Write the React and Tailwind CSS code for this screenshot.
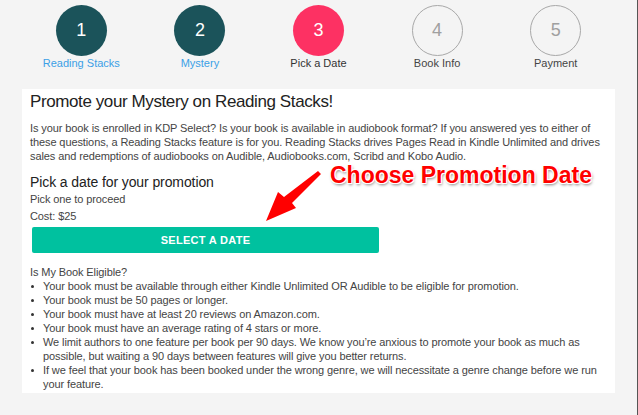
import React from "react";

const STEPS = [
  { n: 1, label: "Reading Stacks", state: "done" },
  { n: 2, label: "Mystery", state: "done" },
  { n: 3, label: "Pick a Date", state: "current" },
  { n: 4, label: "Book Info", state: "todo" },
  { n: 5, label: "Payment", state: "todo" },
];

const INTRO = [
  "Is your book is enrolled in KDP Select? Is your book is available in audiobook format? If you answered yes to either of",
  "these questions, a Reading Stacks feature is for you. Reading Stacks drives Pages Read in Kindle Unlimited and drives",
  "sales and redemptions of audiobooks on Audible, Audiobooks.com, Scribd and Kobo Audio.",
];

const RULES = [
  ["Your book must be available through either Kindle Unlimited OR Audible to be eligible for promotion."],
  ["Your book must be 50 pages or longer."],
  ["Your book must have at least 20 reviews on Amazon.com."],
  ["Your book must have an average rating of 4 stars or more."],
  [
    "We limit authors to one feature per book per 90 days. We know you’re anxious to promote your book as much as",
    "possible, but waiting a 90 days between features will give you better returns.",
  ],
  [
    "If we feel that your book has been booked under the wrong genre, we will necessitate a genre change before we run",
    "your feature.",
  ],
];

function Step({ n, label, state }) {
  const circle =
    state === "done"
      ? "bg-[#1b535a] text-white"
      : state === "current"
      ? "bg-[#fd3163] text-white"
      : "border border-[#a8a8a8] text-[#a0a0a0]";
  const text =
    state === "done" ? "text-[#3ba0e6]" : state === "current" ? "text-[#333]" : "text-[#444]";
  return (
    <div className="flex flex-col items-center">
      <div className={`w-[51px] h-[51px] rounded-full flex items-center justify-center text-[18px] font-light ${circle}`}>
        {n}
      </div>
      <div className={`text-[11px] leading-[14px] ${text}`}>{label}</div>
    </div>
  );
}

export default function App() {
  return (
    <div className="relative w-[638px] h-[415px] bg-[#f4f4f4] flex font-['Liberation_Sans',Arial,sans-serif] overflow-hidden">
      <div className="flex-1 pl-[22px] pr-[22px] pt-[5px]">
        {/* Steps */}
        <div className="grid grid-cols-5">
          {STEPS.map(s => (
            <Step key={s.n} {...s} />
          ))}
        </div>

        {/* Panel */}
        <div className="mt-[19px] bg-white px-[8px] pt-[2px] pb-[2px] text-[#444]">
          <h1 className="text-[17px] leading-[22px] tracking-[-0.4px] text-[#222]">Promote your Mystery on Reading Stacks!</h1>
          <p className="mt-[8px] text-[11px] leading-[14px] tracking-[-0.1px]">
            {INTRO.map(l => (
              <span key={l} className="block whitespace-nowrap">{l}</span>
            ))}
          </p>

          <h2 className="mt-[10px] text-[14px] leading-[18px] tracking-[-0.1px] text-[#222]">Pick a date for your promotion</h2>
          <div className="text-[11px] leading-[17px] tracking-[-0.1px]">Pick one to proceed</div>
          <div className="text-[11px] leading-[17px] tracking-[-0.1px]">Cost: $25</div>
          <button className="mt-[2px] ml-[2px] w-[347px] h-[26px] rounded-[2px] bg-[#00c19f] text-white text-[11px] font-bold tracking-[0.3px]">
            SELECT A DATE
          </button>

          <div className="mt-[12px] text-[11px] leading-[14px] tracking-[-0.1px]">Is My Book Eligible?</div>
          <ul className="text-[11px] leading-[14px] tracking-[-0.1px]">
            {RULES.map(r => (
              <li key={r[0]} className="flex">
                <span className="w-[13px] shrink-0 flex pt-[6px] pl-[1px]">
                  <span className="w-[3px] h-[3px] bg-[#333] rounded-full" />
                </span>
                <span>
                  {r.map(l => (
                    <span key={l} className="block whitespace-nowrap">{l}</span>
                  ))}
                </span>
              </li>
            ))}
          </ul>
        </div>
      </div>
      <div className="w-px bg-[#555]" />

      {/* Annotation */}
      <svg className="absolute left-0 top-0 pointer-events-none" width="638" height="415">
        <path d="M318 171 L321 174 L292 203 L296 208 L266 221 L278 192 L284 197 Z" fill="#ff0000" />
      </svg>
      <div className="absolute left-[330px] top-[162px] text-[23px] leading-[26px] font-bold text-[#ff0000] [text-shadow:-1px_-1px_0_#fff,1px_-1px_0_#fff,-1px_1px_0_#fff,1px_1px_0_#fff,1px_2px_3px_rgba(0,0,0,0.5)]">
        Choose Promotion Date
      </div>
    </div>
  );
}
